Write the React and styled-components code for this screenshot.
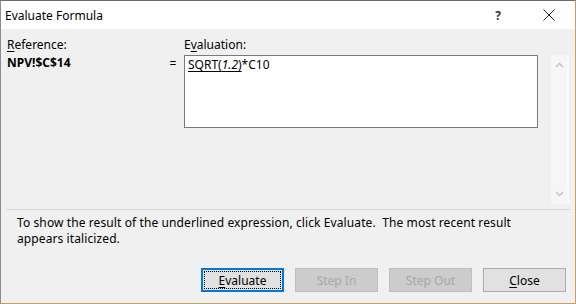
import styled, { createGlobalStyle } from "styled-components";

const GlobalStyle = createGlobalStyle`
  html, body {
    margin: 0;
    padding: 0;
    background: #ffffff;
  }
  body {
    font-family: "Noto Sans", "Open Sans", sans-serif;
    font-size: 12px;
    color: #000000;
  }
`;

const Window = styled.div`
  width: 576px;
  height: 304px;
  box-sizing: border-box;
  display: flex;
  flex-direction: column;
  border-top: 1px solid #6b6b6b;
  border-left: 1px solid #8c8c8c;
  border-right: 1px solid #c99e62;
  border-bottom: 1px solid #c99e62;
  overflow: hidden;
`;

const TitleBar = styled.div`
  height: 28px;
  flex: none;
  display: flex;
  align-items: center;
  background: #ffffff;
  padding-left: 4px;
`;

const Title = styled.div`
  font-size: 12px;
  flex: 1;
`;

const HelpMark = styled.div`
  width: 14px;
  margin-right: 38px;
  font-size: 12px;
  font-weight: bold;
  color: #333;
  text-align: center;
`;

const CloseGlyph = styled.svg`
  margin-right: 20px;
`;

const Body = styled.div`
  flex: 1;
  display: flex;
  flex-direction: column;
  background: #f0f0f0;
  padding: 0 6px 11px 6px;
`;

const Upper = styled.div`
  display: grid;
  grid-template-columns: 155px 22px 354px 1fr;
  grid-template-rows: 16px 149px;
  row-gap: 2px;
  margin-top: 8px;
  line-height: 16px;
`;

const Label = styled.div`
  grid-column: ${(p) => p.$col};
  grid-row: 1;
`;

const Key = styled.span`
  text-decoration: underline;
  text-underline-offset: 2px;
`;

const RefValue = styled.div`
  grid-column: 1;
  grid-row: 2;
  font-weight: bold;
`;

const Equals = styled.div`
  grid-column: 2;
  grid-row: 2;
  text-align: center;
  padding-top: 1px;
`;

const Expression = styled.div`
  grid-column: 3;
  grid-row: 2;
  height: 73px;
  box-sizing: border-box;
  background: #ffffff;
  border: 1px solid #7a7a7a;
  padding: 1px 3px;
`;

const Underlined = styled.span`
  text-decoration: underline;
  text-underline-offset: 2px;
`;

const Scroll = styled.div`
  grid-column: 4;
  grid-row: 2;
  justify-self: end;
  width: 18px;
  background: #f6f6f6;
  border-right: 2px solid #fbfbfb;
  display: flex;
  flex-direction: column;
  justify-content: space-between;
  align-items: center;
  padding: 7px 0;
  box-sizing: border-box;
`;

const Divider = styled.div`
  height: 1px;
  background: #dadada;
  margin: 5px -1px 0 -1px;
`;

const Description = styled.p`
  margin: 5px 0 0 10px;
  line-height: 16px;
  letter-spacing: 0.1px;
`;

const ButtonRow = styled.div`
  margin-top: auto;
  display: flex;
  justify-content: flex-end;
  gap: 11px;
  padding-right: 3px;
`;

const Button = styled.button`
  position: relative;
  width: 83px;
  height: 24px;
  font-family: inherit;
  font-size: 12px;
  padding: 0;
  background: ${(p) => (p.disabled ? "#cccccc" : "#e1e1e1")};
  color: ${(p) => (p.disabled ? "#a8a8a8" : "#000000")};
  border: 1px solid ${(p) => (p.$focused ? "#0078d7" : p.disabled ? "#bfbfbf" : "#adadad")};
  box-shadow: ${(p) => (p.$focused ? "inset 0 0 0 1px #0078d7" : "none")};

  &::after {
    content: "";
    display: ${(p) => (p.$focused ? "block" : "none")};
    position: absolute;
    inset: 2px;
    border: 1px dotted #000000;
  }
`;

const Chevron = ({ up }) => (
  <svg width="9" height="6" viewBox="0 0 9 6">
    <path
      d={up ? "M1 5 L4.5 1.5 L8 5" : "M1 1 L4.5 4.5 L8 1"}
      fill="none"
      stroke="#c0c0c0"
      strokeWidth="1.3"
    />
  </svg>
);

const App = () => {
  return (
    <>
      <GlobalStyle />
      <Window>
        <TitleBar>
          <Title>Evaluate Formula</Title>
          <HelpMark>?</HelpMark>
          <CloseGlyph width="12" height="12" viewBox="0 0 12 12">
            <path d="M0.5 0.5 L11.5 11.5 M11.5 0.5 L0.5 11.5" stroke="#222" strokeWidth="1" />
          </CloseGlyph>
        </TitleBar>
        <Body>
          <Upper>
            <Label $col={1}>
              <Key>R</Key>eference:
            </Label>
            <Label $col={3}>
              E<Key>v</Key>aluation:
            </Label>
            <RefValue>NPV!$C$14</RefValue>
            <Equals>=</Equals>
            <Expression>
              <Underlined>
                SQRT(<i>1.2</i>)
              </Underlined>
              *C10
            </Expression>
            <Scroll>
              <Chevron up />
              <Chevron />
            </Scroll>
          </Upper>
          <Divider />
          <Description>
            To show the result of the underlined expression, click Evaluate.&nbsp; The most recent result
            <br />
            appears italicized.
          </Description>
          <ButtonRow>
            <Button $focused>
              <Key>E</Key>valuate
            </Button>
            <Button disabled>Step In</Button>
            <Button disabled>Step Out</Button>
            <Button>
              <Key>C</Key>lose
            </Button>
          </ButtonRow>
        </Body>
      </Window>
    </>
  );
};

export default App;
